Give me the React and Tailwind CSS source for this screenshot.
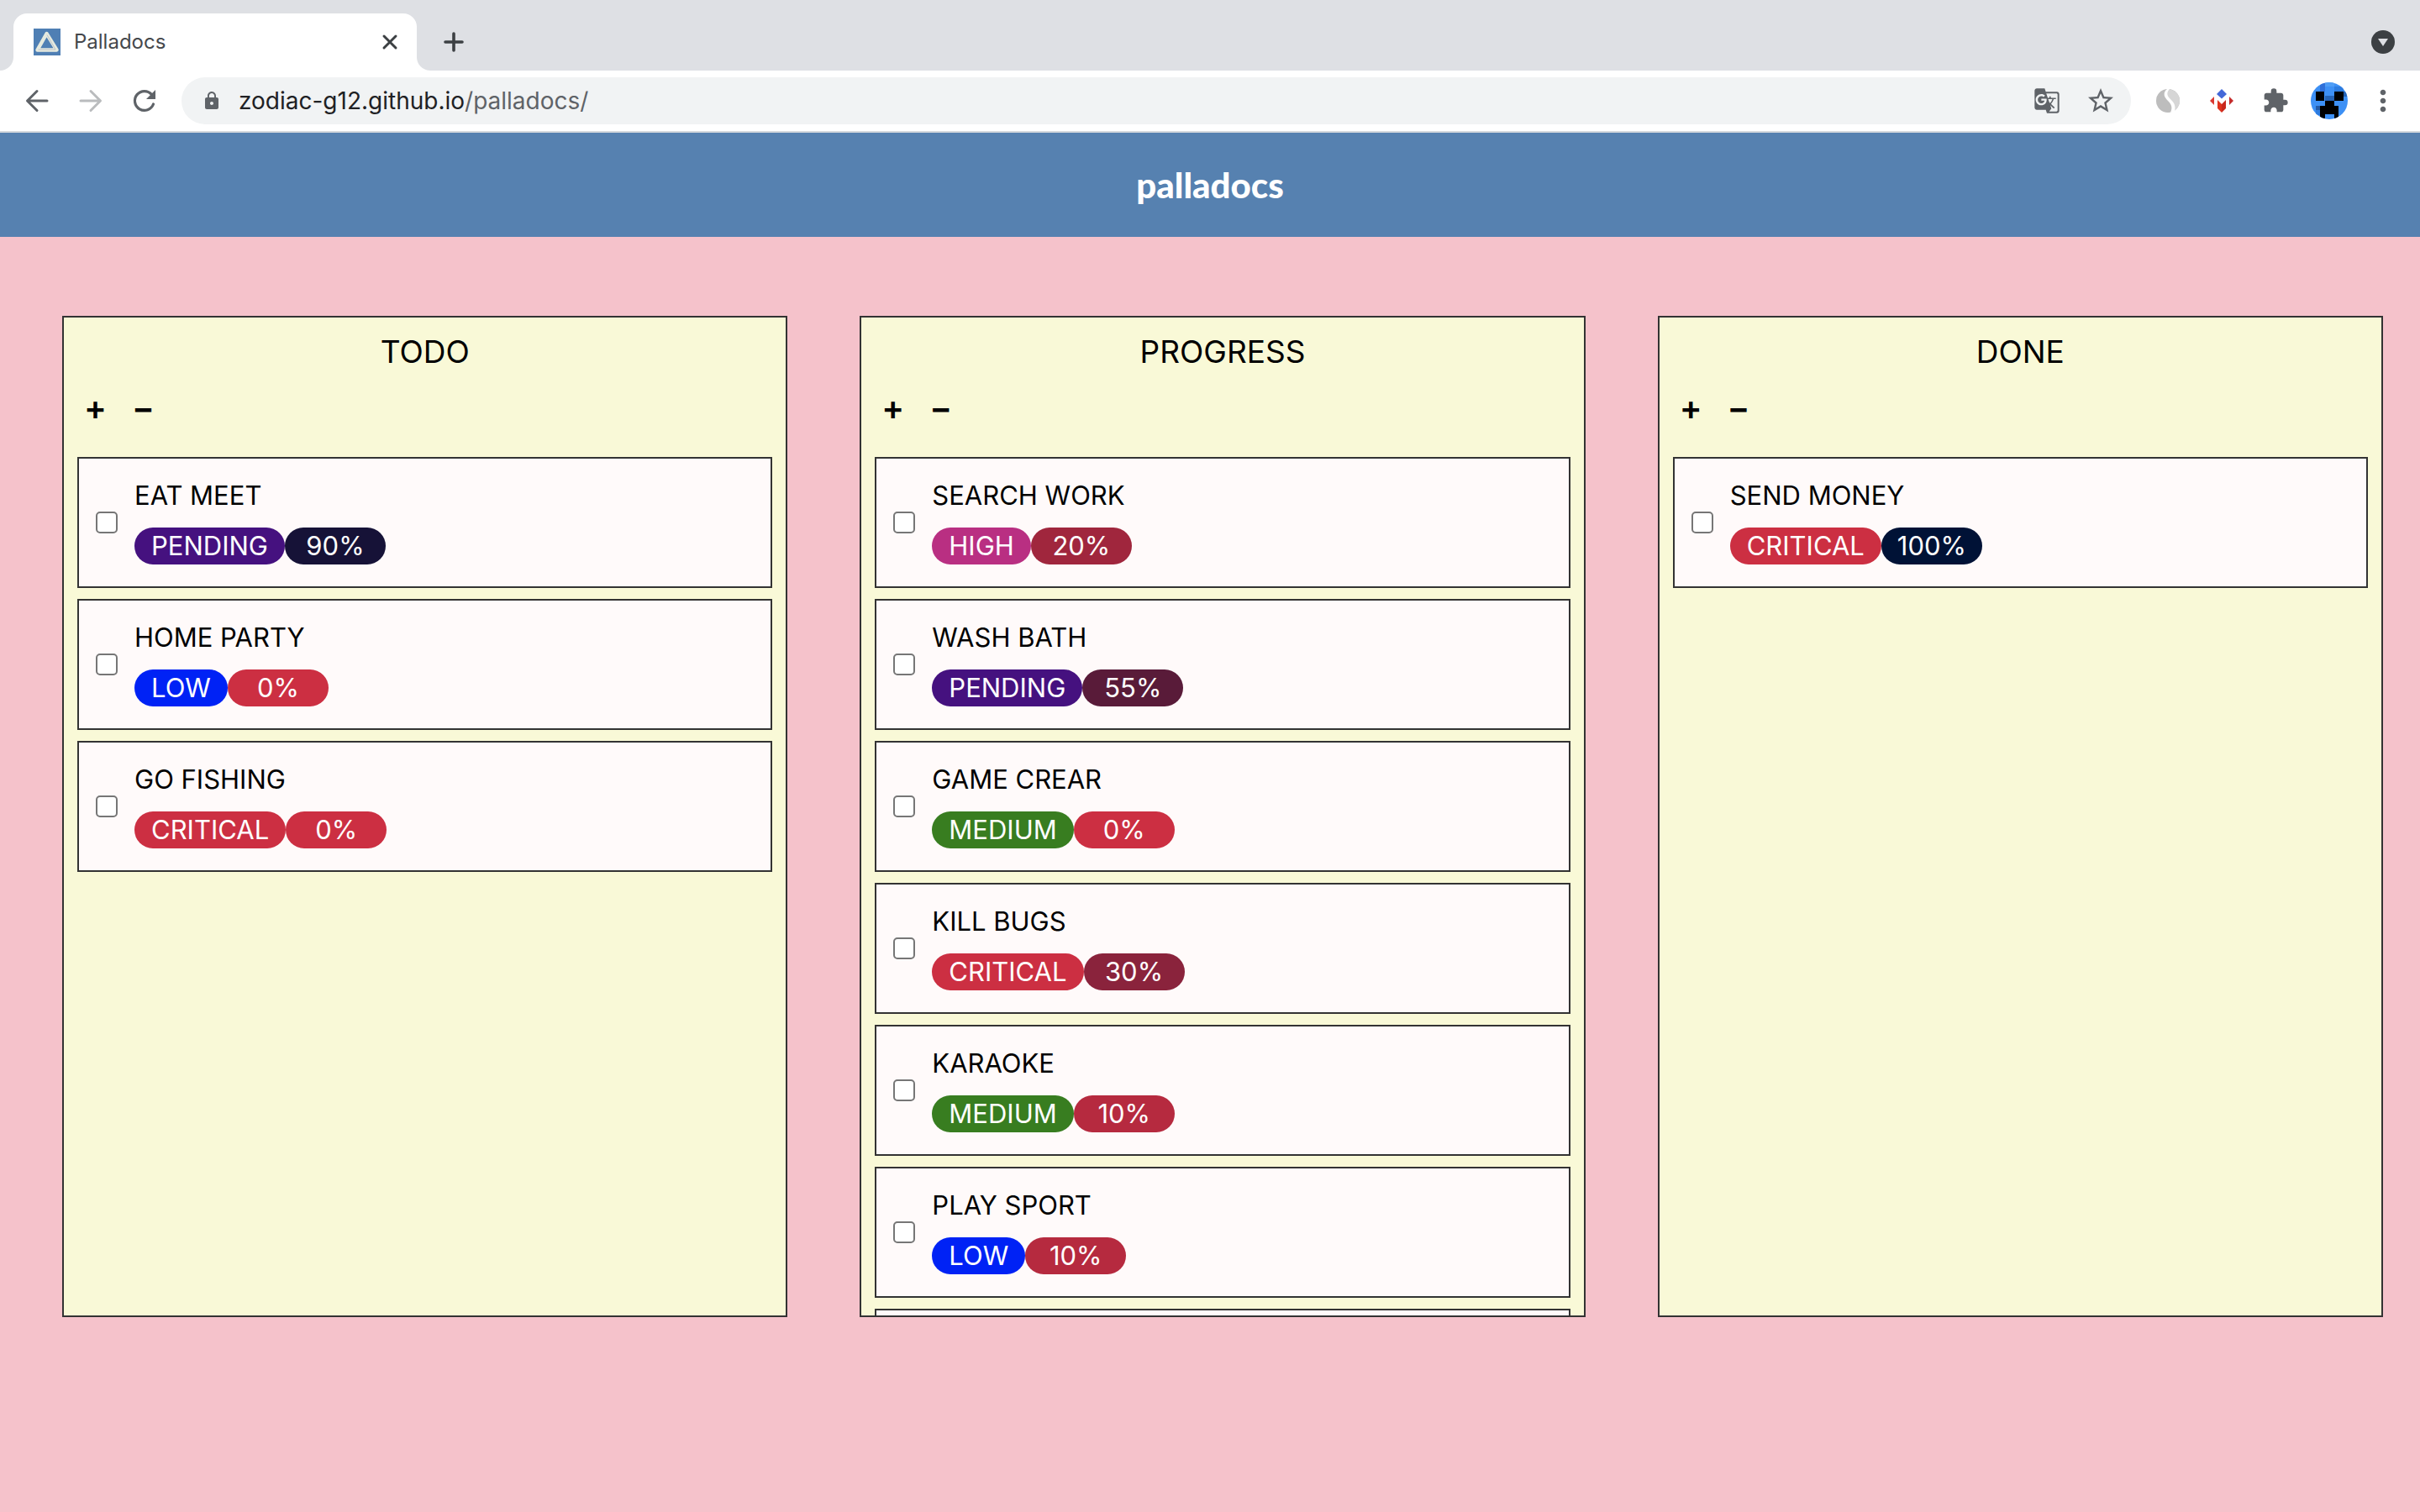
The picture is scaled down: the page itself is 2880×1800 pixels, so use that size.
import { MdGTranslate, MdStarOutline, MdExtension, MdLock, MdMoreVert } from "react-icons/md";

const PRIORITY = {
  PENDING: "bg-[#45117f]",
  LOW: "bg-[#0022f5]",
  MEDIUM: "bg-[#387d20]",
  HIGH: "bg-[#b92f82]",
  CRITICAL: "bg-[#cc2f42]",
};

// Progress fades from crimson (0%) to navy (100%).
const PROGRESS = {
  0: "bg-[#cc2f42]",
  10: "bg-[#b62a3f]",
  20: "bg-[#a0263d]",
  30: "bg-[#8a233c]",
  55: "bg-[#591b39]",
  90: "bg-[#161237]",
  100: "bg-[#001236]",
};

const COLUMNS = [
  {
    title: "TODO",
    tasks: [
      { name: "EAT MEET", priority: "PENDING", done: 90 },
      { name: "HOME PARTY", priority: "LOW", done: 0 },
      { name: "GO FISHING", priority: "CRITICAL", done: 0 },
    ],
  },
  {
    title: "PROGRESS",
    tasks: [
      { name: "SEARCH WORK", priority: "HIGH", done: 20 },
      { name: "WASH BATH", priority: "PENDING", done: 55 },
      { name: "GAME CREAR", priority: "MEDIUM", done: 0 },
      { name: "KILL BUGS", priority: "CRITICAL", done: 30 },
      { name: "KARAOKE", priority: "MEDIUM", done: 10 },
      { name: "PLAY SPORT", priority: "LOW", done: 10 },
      { name: "" },
    ],
  },
  {
    title: "DONE",
    tasks: [{ name: "SEND MONEY", priority: "CRITICAL", done: 100 }],
  },
];

function Favicon() {
  return (
    <svg viewBox="0 0 32 32" className="size-8 shrink-0" aria-hidden="true">
      <rect width="32" height="32" fill="#4f7fb4" />
      <path d="M15.5 6 L27.5 25.5 H4.5 Z" fill="none" stroke="#e6eadf" strokeWidth="4.4" strokeLinejoin="round" />
      <path d="M16 7.5 L26 25 H5.5" fill="none" stroke="#b3b8c4" strokeWidth="0.8" />
    </svg>
  );
}

function BackIcon() {
  return (
    <svg viewBox="0 0 40 40" className="size-10" fill="none" stroke="currentColor" strokeWidth="3" strokeLinecap="round" strokeLinejoin="round">
      <path d="M32 20 H9 M20 8.5 L8.5 20 L20 31.5" />
    </svg>
  );
}

function ForwardIcon() {
  return (
    <svg viewBox="0 0 40 40" className="size-10" fill="none" stroke="currentColor" strokeWidth="3" strokeLinecap="round" strokeLinejoin="round">
      <path d="M8 20 H31 M20 8.5 L31.5 20 L20 31.5" />
    </svg>
  );
}

function ReloadIcon() {
  return (
    <svg viewBox="0 0 40 40" className="size-10">
      <path d="M30.5 24 A11.4 11.4 0 1 1 28.5 12.5" fill="none" stroke="currentColor" strokeWidth="3.2" strokeLinecap="round" />
      <path d="M33 7 V18 H22 Z" fill="currentColor" />
    </svg>
  );
}

function SwirlIcon() {
  return (
    <svg viewBox="0 0 28 28" className="size-7">
      <circle cx="14" cy="14" r="14" fill="#bdbdbd" />
      <path d="M14 0 A14 14 0 0 1 22 25.500 C23 16 12 14 12 7 C12 3 13 1 14 0 Z" fill="#d6d6d6" />
      <path d="M13 0 C7 5 10 10 14 14 C18 18 20 22 17 28 L22 27 C24 18 20 15 16 11 C13 8 12 4 16 0 Z" fill="#fff" />
    </svg>
  );
}

function DiamondIcon() {
  return (
    <svg viewBox="0 0 28 28" className="size-7">
      <path d="M14 0 L20 6 L14 11.500 L8 6 Z" fill="#4468d8" />
      <path d="M5 9 V19 L0 14 Z" fill="#d93a33" />
      <path d="M23 9 V19 L28 14 Z" fill="#c42b2b" />
      <path d="M9 13 L14 18 V28 L9 23 Z" fill="#e0341f" />
      <path d="M19 13 L14 18 V28 L19 23 Z" fill="#c9281d" />
    </svg>
  );
}

function Avatar() {
  return (
    <svg viewBox="0 0 44 44" className="size-11">
      <defs>
        <clipPath id="avatar-clip"><circle cx="22" cy="22" r="22" /></clipPath>
      </defs>
      <g clipPath="url(#avatar-clip)">
        <rect width="44" height="44" fill="#3d90f5" />
        <rect x="11" width="6" height="11" fill="#2f6fd8" />
        <rect x="17" width="11" height="5" fill="#4f9df5" />
        <rect x="28" y="5" width="11" height="6" fill="#2d7ce0" />
        <rect x="17" y="16" width="11" height="6" fill="#2563b5" />
        <rect x="39" y="11" width="5" height="6" fill="#2563b5" />
        <rect x="6" y="28" width="5" height="5" fill="#235aa8" />
        <rect x="6" y="33" width="5" height="6" fill="#2d7ce0" />
        <path d="M6 11 H16 V22 H28 V11 H39 V22 H28 V28 H33 V43 H28 V38 H17 V43 H11 V28 H17 V22 H6 Z" fill="#000" />
      </g>
    </svg>
  );
}

function TabStrip() {
  return (
    <div className="flex h-[84px] shrink-0 items-end bg-[#dee0e4] pr-[30px]">
      <svg viewBox="0 0 16 16" className="size-4 shrink-0" aria-hidden="true"><path d="M16 0 A16 16 0 0 1 0 16 H16 Z" fill="#fff" /></svg>
      <div className="flex h-[68px] w-[480px] items-center rounded-t-2xl bg-white pl-6 pr-5">
        <Favicon />
        <span className="ml-4 grow text-2xl text-[#45484c]">Palladocs</span>
        <button type="button" aria-label="Close tab">
          <svg viewBox="0 0 24 24" className="size-6" stroke="#3c4043" strokeWidth="3" strokeLinecap="round"><path d="M5 5 L19 19 M19 5 L5 19" /></svg>
        </button>
      </div>
      <svg viewBox="0 0 16 16" className="size-4 shrink-0" aria-hidden="true"><path d="M0 0 A16 16 0 0 0 16 16 H0 Z" fill="#fff" /></svg>
      <button type="button" aria-label="New tab" className="mb-3.5 ml-2">
        <svg viewBox="0 0 40 40" className="size-10" stroke="#3c4043" strokeWidth="3.6" strokeLinecap="round"><path d="M20 10 V30 M10 20 H30" /></svg>
      </button>
      <button type="button" aria-label="Search tabs" className="mb-5 ml-auto">
        <svg viewBox="0 0 28 28" className="size-7">
          <circle cx="14" cy="14" r="14" fill="#3c4043" />
          <path d="M8 10 H20 L14 19 Z" fill="#dee0e4" />
        </svg>
      </button>
    </div>
  );
}

function Toolbar() {
  return (
    <div className="flex h-[74px] shrink-0 items-center border-b-2 border-[#d5d9dd] bg-white pl-6 pr-7 text-[#5f6368]">
      <button type="button" aria-label="Back"><BackIcon /></button>
      <button type="button" aria-label="Forward" className="ml-6 text-[#babcbe]"><ForwardIcon /></button>
      <button type="button" aria-label="Reload" className="ml-6"><ReloadIcon /></button>
      <div className="ml-6 flex h-14 grow items-center rounded-full bg-[#f1f3f4] pl-6 pr-5">
        <MdLock className="size-6" />
        <a href="https://zodiac-g12.github.io/palladocs/" className="ml-5 grow text-[28px]">
          <span className="text-[#202124]">zodiac-g12.github.io</span>/palladocs/
        </a>
        <button type="button" aria-label="Translate" className="flex w-8 justify-center"><MdGTranslate className="size-8 shrink-0" /></button>
        <button type="button" aria-label="Bookmark" className="ml-8 flex w-8 justify-center"><MdStarOutline className="size-9 shrink-0" /></button>
      </div>
      <button type="button" aria-label="Page reader" className="ml-7 flex w-8 justify-center"><SwirlIcon /></button>
      <button type="button" aria-label="Mail checker" className="ml-8 flex w-8 justify-center"><DiamondIcon /></button>
      <button type="button" aria-label="Extensions" className="ml-8 flex w-8 justify-center"><MdExtension className="size-8 shrink-0" /></button>
      <button type="button" aria-label="Profile" className="ml-[26px]"><Avatar /></button>
      <button type="button" aria-label="Menu" className="ml-[26px] flex w-8 justify-center"><MdMoreVert className="size-10 shrink-0" /></button>
    </div>
  );
}

function Pill({ className, children }) {
  return <span className={`flex h-11 items-center rounded-full text-[31px] text-white ${className}`}>{children}</span>;
}

function Card({ task, id }) {
  return (
    <li className="flex h-[156px] shrink-0 items-center border-2 border-[#333] bg-[#fffafa] pl-5">
      <input id={id} type="checkbox" aria-label={task.name || "Task"} className="size-[26px] shrink-0 appearance-none rounded-[5px] border-2 border-[#767676] bg-white" />
      {task.name && (
        <div className="ml-5 pb-1.5">
          <label htmlFor={id} className="block text-[31px] leading-[48px]">{task.name}</label>
          <div className="mt-3.5 flex">
            <Pill className={`px-5 ${PRIORITY[task.priority]}`}>{task.priority}</Pill>
            <Pill className={`w-[120px] justify-center ${PROGRESS[task.done]}`}>{task.done}%</Pill>
          </div>
        </div>
      )}
    </li>
  );
}

function Column({ column }) {
  return (
    <section className="flex min-h-0 flex-col overflow-hidden border-2 border-[#333] bg-[#f9f9d7] px-4">
      <h2 className="mt-4 shrink-0 text-center text-[37px] leading-[50px]">{column.title}</h2>
      <div className="mt-5 flex shrink-0 gap-[30px] px-2 text-[40px] font-semibold leading-[44px]">
        <button type="button">+</button>
        <button type="button">−</button>
      </div>
      <ul className="mt-9 flex flex-col gap-[13px]">
        {column.tasks.map((task, i) => (
          <Card key={i} id={`${column.title}-${i}`} task={task} />
        ))}
      </ul>
    </section>
  );
}

export default function App() {
  return (
    <div className="flex h-screen flex-col bg-[#f5c2cb] font-['Inter',sans-serif] text-black">
      <TabStrip />
      <Toolbar />
      <header className="flex h-[124px] shrink-0 items-center justify-center bg-[#5681b0]">
        <h1 className="font-['Lato',sans-serif] text-[42px] font-black text-white">palladocs</h1>
      </header>
      <main className="grid min-h-0 grow auto-rows-fr grid-cols-3 gap-[86px] pb-[232px] pl-[74px] pr-11 pt-[94px]">
        {COLUMNS.map((c) => (
          <Column key={c.title} column={c} />
        ))}
      </main>
    </div>
  );
}
